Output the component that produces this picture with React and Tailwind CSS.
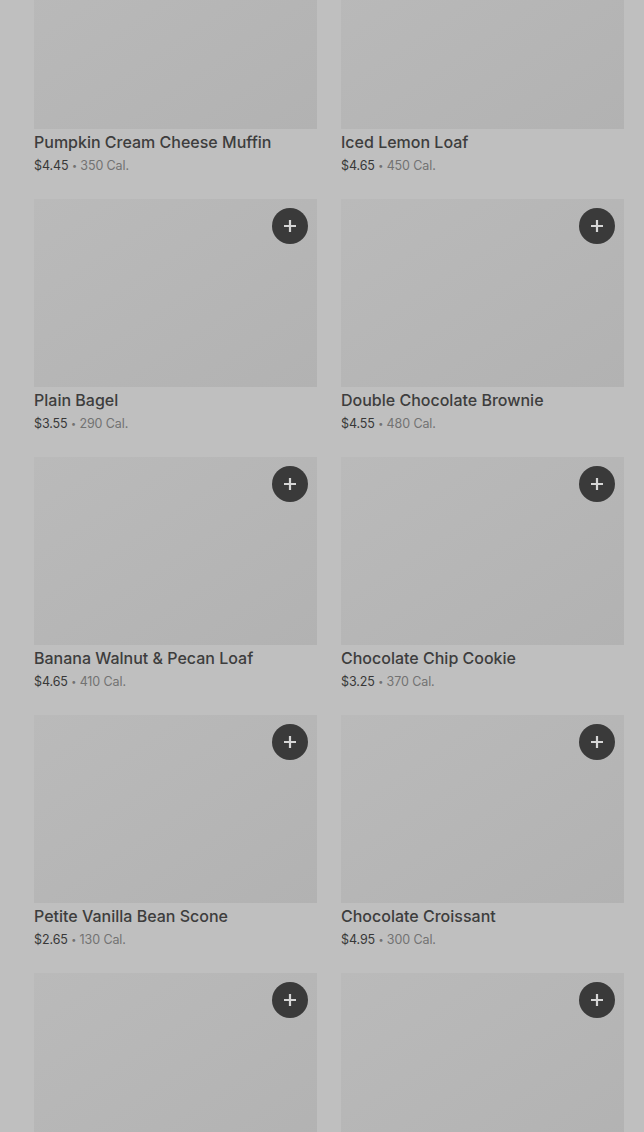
import React from "react";

const items = [
  { name: "Pumpkin Cream Cheese Muffin", price: "$4.45", cal: "350 Cal." },
  { name: "Iced Lemon Loaf", price: "$4.65", cal: "450 Cal." },
  { name: "Plain Bagel", price: "$3.55", cal: "290 Cal." },
  { name: "Double Chocolate Brownie", price: "$4.55", cal: "480 Cal." },
  { name: "Banana Walnut & Pecan Loaf", price: "$4.65", cal: "410 Cal." },
  { name: "Chocolate Chip Cookie", price: "$3.25", cal: "370 Cal." },
  { name: "Petite Vanilla Bean Scone", price: "$2.65", cal: "130 Cal." },
  { name: "Chocolate Croissant", price: "$4.95", cal: "300 Cal." },
  { name: "", price: "", cal: "" },
  { name: "", price: "", cal: "" },
];

function ItemCard({ item }) {
  return (
    <div className="flex flex-col">
      <div className="relative h-[188px] bg-gradient-to-br from-[#bababa] to-[#b2b2b2]">
        <button className="absolute right-[9px] top-[9px] flex h-9 w-9 items-center justify-center rounded-full bg-[#3a3a3a] text-[#d6d6d6]">
          <svg width="14" height="14" viewBox="0 0 14 14" fill="none">
            <path d="M7 1v12M1 7h12" stroke="currentColor" strokeWidth="2.2" />
          </svg>
        </button>
      </div>
      <div className="h-[70px] pt-[2px]">
        <p className="text-[16px] leading-[22px] font-medium text-[#3d3d3d]">
          {item.name}
        </p>
        <p className="mt-[4px] text-[12.5px] leading-[18px] tracking-[-0.1px] text-[#383838]">
          {item.price}
          {item.price && (
            <span className="text-[#727272]">
              {" "}
              <span className="text-[9px] align-[1px]">•</span> {item.cal}
            </span>
          )}
        </p>
      </div>
    </div>
  );
}

export default function App() {
  return (
    <div
      className="h-[1132px] overflow-hidden bg-[#bfbfbf]"
      style={{ fontFamily: "Inter, 'Noto Sans', sans-serif" }}
    >
      <div className="-mt-[59px] grid grid-cols-[283px_283px] gap-x-6 pl-[34px]">
        {items.map((item, i) => (
          <ItemCard key={i} item={item} />
        ))}
      </div>
    </div>
  );
}
